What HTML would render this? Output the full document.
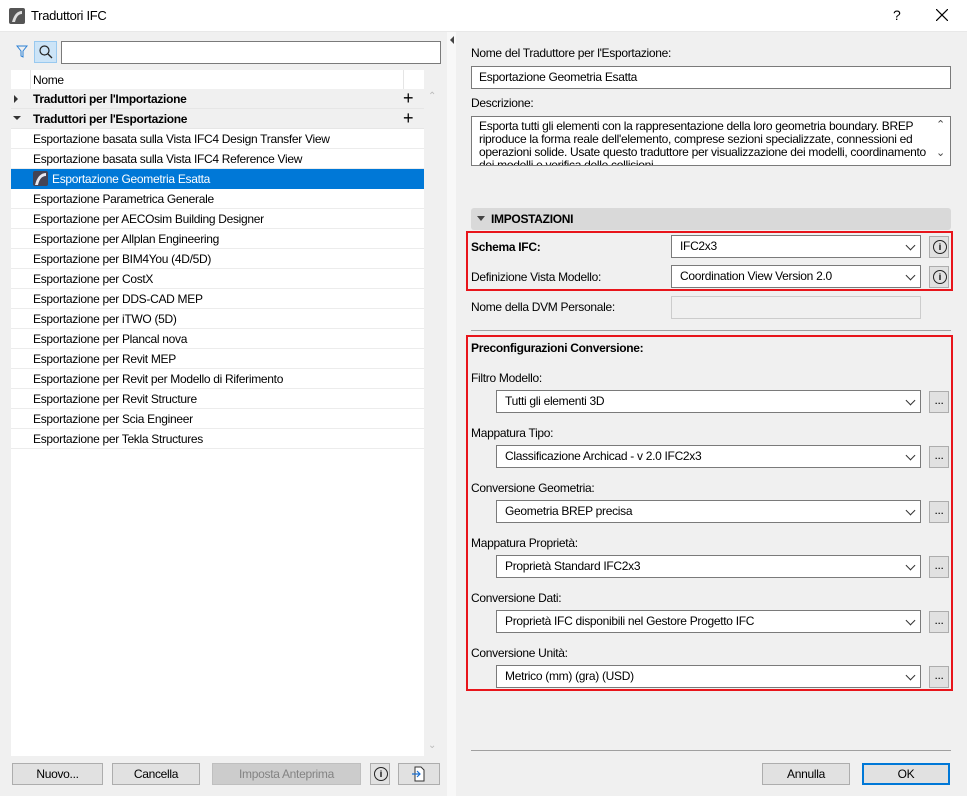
<!DOCTYPE html>
<html><head><meta charset="utf-8"><style>
*{box-sizing:border-box;margin:0;padding:0}
body{width:967px;height:796px;position:relative;background:#f0f0f0;font-family:"Liberation Sans",sans-serif;font-size:12px;letter-spacing:-0.3px;color:#000;overflow:hidden}
.a{position:absolute}
.title{left:0;top:0;width:967px;height:32px;background:#fff;border-bottom:1px solid #e8e8e8}
.row{position:absolute;left:11px;width:413px;height:20px;line-height:20px;padding-left:22px;border-bottom:1px solid #ececec;background:#fff;white-space:nowrap}
.grp{background:#f0f0f0;font-weight:bold;border-bottom:1px solid #e6e6e6}
.inp{position:absolute;background:#fff;border:1px solid #7a7a7a;line-height:20px;padding-left:7px;white-space:nowrap}
.dd{position:absolute;background:#fff;border:1px solid #7a7a7a;height:23px;line-height:21px;padding-left:8px;white-space:nowrap}
.dd:after{content:"";position:absolute;right:6px;top:6px;width:6px;height:6px;border-right:1px solid #333;border-bottom:1px solid #333;transform:rotate(45deg)}
.btn{position:absolute;background:#e1e1e1;border:1px solid #adadad;height:22px;line-height:20px;text-align:center}
.lab{position:absolute;white-space:nowrap}
.red{position:absolute;border:2px solid #e8151b}
.info{position:absolute;width:20px;height:22px;background:#e1e1e1;border:1px solid #adadad}
.info:after{content:"i";position:absolute;left:3px;top:3px;width:12px;height:12px;border:1px solid #222;border-radius:50%;font-size:9px;line-height:12px;text-align:center;font-weight:bold;letter-spacing:0}
</style></head><body>
<div class="a title"></div>
<svg class="a" style="left:9px;top:8px" width="16" height="16"><rect width="16" height="16" rx="2" fill="#555"/><path d="M3 14 Q6 3 13 3 L13 6 Q8 6 6 14Z" fill="#ddd"/></svg>
<div class="lab" style="left:31px;top:8px;font-size:13px">Traduttori IFC</div>
<div class="lab" style="left:893px;top:7px;font-size:14px">?</div>
<svg class="a" style="left:936px;top:9px" width="12" height="12"><path d="M0 0L12 12M12 0L0 12" stroke="#000" stroke-width="1.2"/></svg>

<svg class="a" style="left:16px;top:45px" width="12" height="14"><path d="M1 1H11L7 6V12L5 11V6Z" fill="none" stroke="#2a7fd4"/></svg>
<div class="a" style="left:34px;top:41px;width:23px;height:22px;background:#cce4f7;border:1px solid #99c9ef"></div>
<svg class="a" style="left:38px;top:44px" width="16" height="16"><circle cx="6.5" cy="6.5" r="4.5" fill="none" stroke="#222" stroke-width="1.2"/><path d="M10 10L14 14" stroke="#222" stroke-width="1.3"/></svg>
<div class="inp" style="left:61px;top:41px;width:380px;height:23px;border-color:#7a7a7a"></div>

<div class="a" style="left:11px;top:70px;width:413px;height:686px;background:#fff"></div>
<div class="row" style="top:70px;height:19px;border-bottom:none">Nome</div>
<div class="a" style="left:30px;top:70px;width:1px;height:19px;background:#e5e5e5"></div>
<div class="a" style="left:403px;top:70px;width:1px;height:19px;background:#e5e5e5"></div>
<div class="row grp" style="top:89px">Traduttori per l'Importazione</div>
<div class="row grp" style="top:109px">Traduttori per l'Esportazione</div>
<div class="a" style="left:14px;top:95px;border-left:4px solid #333;border-top:4px solid transparent;border-bottom:4px solid transparent"></div>
<div class="a" style="left:13px;top:116px;border-top:4px solid #333;border-left:4px solid transparent;border-right:4px solid transparent"></div>
<div class="lab" style="left:403px;top:88px;font-size:18px;font-weight:300">+</div>
<div class="lab" style="left:403px;top:108px;font-size:18px;font-weight:300">+</div>
<div class="row" style="top:129px">Esportazione basata sulla Vista IFC4 Design Transfer View</div>
<div class="row" style="top:149px">Esportazione basata sulla Vista IFC4 Reference View</div>
<div class="row" style="top:169px;background:#0078d7;color:#fff;padding-left:41px;border-bottom:none">Esportazione Geometria Esatta</div>
<svg class="a" style="left:33px;top:171px" width="15" height="15"><rect width="15" height="15" rx="2" fill="#445"/><path d="M2 14Q5 2 13 2L13 5Q7 5 5 14Z" fill="#e8e8f0"/></svg>
<div class="row" style="top:189px">Esportazione Parametrica Generale</div>
<div class="row" style="top:209px">Esportazione per AECOsim Building Designer</div>
<div class="row" style="top:229px">Esportazione per Allplan Engineering</div>
<div class="row" style="top:249px">Esportazione per BIM4You (4D/5D)</div>
<div class="row" style="top:269px">Esportazione per CostX</div>
<div class="row" style="top:289px">Esportazione per DDS-CAD MEP</div>
<div class="row" style="top:309px">Esportazione per iTWO (5D)</div>
<div class="row" style="top:329px">Esportazione per Plancal nova</div>
<div class="row" style="top:349px">Esportazione per Revit MEP</div>
<div class="row" style="top:369px">Esportazione per Revit per Modello di Riferimento</div>
<div class="row" style="top:389px">Esportazione per Revit Structure</div>
<div class="row" style="top:409px">Esportazione per Scia Engineer</div>
<div class="row" style="top:429px">Esportazione per Tekla Structures</div>
<div class="lab" style="left:428px;top:91px;color:#bbb;font-size:10px">&#8963;</div>
<div class="lab" style="left:428px;top:740px;color:#bbb;font-size:10px">&#8964;</div>

<div class="a" style="left:447px;top:32px;width:9px;height:764px;background:#f8f8f8"></div>
<div class="a" style="left:450px;top:36px;border-right:4px solid #444;border-top:4px solid transparent;border-bottom:4px solid transparent"></div>

<div class="btn" style="left:12px;top:763px;width:91px">Nuovo...</div>
<div class="btn" style="left:112px;top:763px;width:88px">Cancella</div>
<div class="btn" style="left:212px;top:763px;width:149px;background:#cccccc;border-color:#bfbfbf;color:#838383">Imposta Anteprima</div>
<div class="info" style="left:370px;top:763px"></div>
<div class="btn" style="left:398px;top:763px;width:42px"></div>
<svg class="a" style="left:411px;top:766px" width="16" height="16"><path d="M4 1H10L13 4V15H4Z" fill="#fff" stroke="#333"/><path d="M1 8H9M6 5L9 8L6 11" fill="none" stroke="#1a6fd1" stroke-width="1.2"/></svg>

<div class="lab" style="left:471px;top:46px">Nome del Traduttore per l'Esportazione:</div>
<div class="inp" style="left:471px;top:66px;width:480px;height:23px">Esportazione Geometria Esatta</div>
<div class="lab" style="left:471px;top:96px">Descrizione:</div>
<div class="inp" style="left:471px;top:116px;width:480px;height:50px;line-height:13px;padding-top:3px;overflow:hidden;white-space:normal;padding-right:24px">Esporta tutti gli elementi con la rappresentazione della loro geometria boundary. BREP riproduce la forma reale dell'elemento, comprese sezioni specializzate, connessioni ed operazioni solide. Usate questo traduttore per visualizzazione dei modelli, coordinamento dei modelli e verifica delle collisioni.</div>
<div class="a" style="left:932px;top:117px;width:18px;height:48px;background:#fff"></div>
<div class="lab" style="left:936px;top:118px;font-size:11px;color:#444">&#8963;</div>
<div class="lab" style="left:936px;top:146px;font-size:11px;color:#444">&#8964;</div>

<div class="a" style="left:471px;top:208px;width:480px;height:22px;background:#d9d9d9;border-radius:3px"></div>
<div class="a" style="left:477px;top:216px;border-top:5px solid #444;border-left:4px solid transparent;border-right:4px solid transparent"></div>
<div class="lab" style="left:491px;top:212px;font-weight:bold">IMPOSTAZIONI</div>

<div class="red" style="left:466px;top:231px;width:487px;height:60px"></div>
<div class="lab" style="left:471px;top:240px;font-weight:bold">Schema IFC:</div>
<div class="dd" style="left:671px;top:235px;width:250px">IFC2x3</div>
<div class="info" style="left:929px;top:236px"></div>
<div class="lab" style="left:471px;top:270px">Definizione Vista Modello:</div>
<div class="dd" style="left:671px;top:265px;width:250px">Coordination View Version 2.0</div>
<div class="info" style="left:929px;top:266px"></div>
<div class="lab" style="left:471px;top:300px">Nome della DVM Personale:</div>
<div class="a" style="left:671px;top:296px;width:250px;height:23px;border:1px solid #ccc;background:#f0f0f0"></div>
<div class="a" style="left:471px;top:330px;width:480px;height:1px;background:#a0a0a0"></div>

<div class="red" style="left:466px;top:335px;width:487px;height:356px"></div>
<div class="lab" style="left:471px;top:341px;font-weight:bold">Preconfigurazioni Conversione:</div>
<div class="lab" style="left:471px;top:371px">Filtro Modello:</div>
<div class="dd" style="left:496px;top:390px;width:425px">Tutti gli elementi 3D</div>
<div class="btn" style="left:929px;top:391px;width:20px;line-height:16px">...</div>
<div class="lab" style="left:471px;top:426px">Mappatura Tipo:</div>
<div class="dd" style="left:496px;top:445px;width:425px">Classificazione Archicad - v 2.0 IFC2x3</div>
<div class="btn" style="left:929px;top:446px;width:20px;line-height:16px">...</div>
<div class="lab" style="left:471px;top:481px">Conversione Geometria:</div>
<div class="dd" style="left:496px;top:500px;width:425px">Geometria BREP precisa</div>
<div class="btn" style="left:929px;top:501px;width:20px;line-height:16px">...</div>
<div class="lab" style="left:471px;top:536px">Mappatura Proprietà:</div>
<div class="dd" style="left:496px;top:555px;width:425px">Proprietà Standard IFC2x3</div>
<div class="btn" style="left:929px;top:556px;width:20px;line-height:16px">...</div>
<div class="lab" style="left:471px;top:591px">Conversione Dati:</div>
<div class="dd" style="left:496px;top:610px;width:425px">Proprietà IFC disponibili nel Gestore Progetto IFC</div>
<div class="btn" style="left:929px;top:611px;width:20px;line-height:16px">...</div>
<div class="lab" style="left:471px;top:646px">Conversione Unità:</div>
<div class="dd" style="left:496px;top:665px;width:425px">Metrico (mm) (gra) (USD)</div>
<div class="btn" style="left:929px;top:666px;width:20px;line-height:16px">...</div>

<div class="a" style="left:471px;top:750px;width:480px;height:1px;background:#a0a0a0"></div>
<div class="btn" style="left:762px;top:763px;width:88px">Annulla</div>
<div class="btn" style="left:862px;top:763px;width:88px;border:2px solid #0078d7;line-height:18px">OK</div>
</body></html>
